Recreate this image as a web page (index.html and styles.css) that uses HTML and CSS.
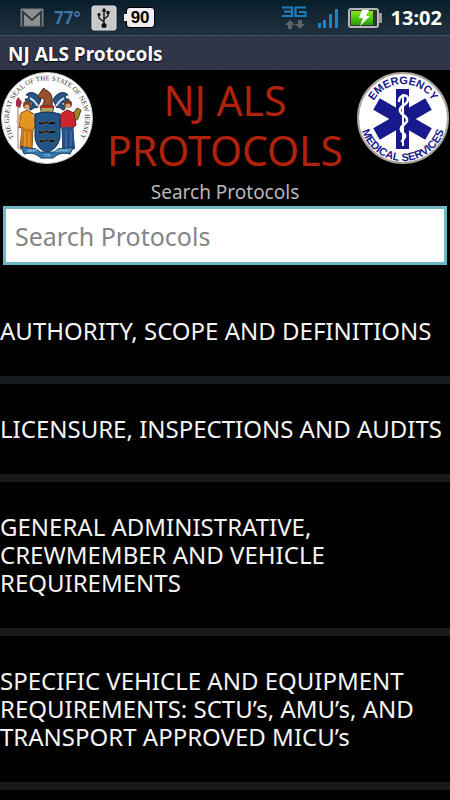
FILE: index.html
```
<!DOCTYPE html>
<html lang="en">
<head>
    <meta charset="UTF-8">
    <meta name="viewport" content="width=device-width, initial-scale=1.0">
    <title>NJ ALS Protocols</title>
    <link rel="stylesheet" href="styles.css">
</head>
<body>
    <div class="statusBar">
        <div class="statusLeft">
            <svg class="mail" width="24" height="20" viewBox="0 0 24 20">
                <rect x="1" y="1" width="22" height="17" fill="#8d9091" stroke="#73797c"/>
                <path d="M3 18V4l9 8 9-8v14" fill="none" stroke="#343c40" stroke-width="2"/>
            </svg>
            <span class="temp">77°</span>
            <svg width="26" height="26" viewBox="0 0 26 26">
                <rect x="1" y="1" width="24" height="24" rx="2" fill="#c9c9c9" stroke="#dedede"/>
                <path d="M13 20V5M13 17l-5-4v-3M13 14l4-3V8" fill="none" stroke="#111" stroke-width="1.4"/>
                <path d="M10.500 6.500L13 2.500l2.500 4z" fill="#111"/>
                <circle cx="13" cy="20.500" r="2.500" fill="#111"/>
                <circle cx="8" cy="9.500" r="1.600" fill="#111"/>
                <rect x="15.500" y="6" width="3" height="3" fill="#111"/>
            </svg>
            <span class="level">90</span>
        </div>
        <div class="statusRight">
            <svg width="28" height="26" viewBox="0 0 28 26">
                <path d="M1 2.500h10v8.500H1M3 6.700h8M25 2.500H14.500v8.500H24.500V7H18" fill="none" stroke="#1c7db8" stroke-width="2.200"/>
                <path d="M9 15l5 5h-3v4H7v-4H4zM19 24l-5-5h3v-4h4v4h3z" fill="#5c6468"/>
            </svg>
            <svg width="22" height="22" viewBox="0 0 22 22">
                <path d="M1 16h3v5H1zM6 13h3v8H6zM12 7h3v14h-3zM18 2h3v19h-3z" fill="#1f86c4"/>
            </svg>
            <svg width="36" height="22" viewBox="0 0 36 22">
                <defs>
                    <linearGradient id="charge" x1="0" y1="0" x2="0" y2="1">
                        <stop offset="0" stop-color="#8fe22c"/>
                        <stop offset="0.500" stop-color="#4fc813"/>
                        <stop offset="1" stop-color="#28980a"/>
                    </linearGradient>
                </defs>
                <rect x="31" y="6" width="4" height="10" fill="#999"/>
                <rect x="2" y="2" width="29" height="18" rx="2" fill="#333" stroke="#b4b8b4" stroke-width="2"/>
                <rect x="4" y="4" width="22" height="14" fill="url(#charge)"/>
                <path d="M15 3h7l-3 6h4L13 19l3-8h-4z" fill="#fff"/>
            </svg>
            <span class="clock">13:02</span>
        </div>
    </div>

    <div class="titleBar">NJ ALS Protocols</div>

    <header class="banner">
        <svg class="seal" viewBox="0 0 94 94" role="img" aria-label="Great Seal of the State of New Jersey">
            <defs>
                <path id="sealArc" d="M20 74A38 38 0 1 1 74 74"/>
            </defs>
            <circle cx="47" cy="47" r="45.500" fill="#fff" stroke="#c4c4c4"/>
            <text class="sealText"><textPath href="#sealArc" startOffset="50%" text-anchor="middle">THE GREAT SEAL OF THE STATE OF NEW JERSEY</textPath></text>
            <!-- mantling and horse head -->
            <path d="M41 29c-3-7-11-10-15-5 5 0 2 5-1 4 1 5 7 2 8 6-4-1-5 3-3 5 3 0 4-4 7-2zM53 29c3-7 11-10 15-5-5 0-2 5 1 4-1 5-7 2-8 6 4-1 5 3 3 5-3 0-4-4-7-2z" fill="#285583" stroke="#152c4b"/>
            <path d="M30 27l4 3 4 5M64 27l-4 3-4 5" fill="none" stroke="#dce6ee" stroke-width="2"/>
            <path d="M42 35c2-4 3-6 1-8l-4 1-1-3 4-6 2-2 1 2c6 1 8 7 7 16z" fill="#96502d" stroke="#4b2416"/>
            <path d="M40 35h14l-2 10H42z" fill="#a7a760" stroke="#54461f"/>
            <path d="M40 36h14" stroke="#b52a28" stroke-width="2"/>
            <!-- liberty -->
            <path d="M18 29v49" stroke="#9b795e"/>
            <path d="M16 30l2-4 4 5-2 6-4-2z" fill="#a52b4e"/>
            <circle cx="27" cy="34" r="4" fill="#774522"/>
            <circle cx="27" cy="36" r="2.500" fill="#d9a57c"/>
            <path d="M21 42l6-3 7 4 2 12-3 3-1 20H20l2-22-3 1z" fill="#e3961d" stroke="#885014"/>
            <path d="M19 44l-1 8M33 44l5 6" stroke="#d9a57c" stroke-width="3"/>
            <path d="M21 57l11 1v20H21z" fill="#ca7616"/>
            <path d="M25 60v17M29 61v15" stroke="#efb23c"/>
            <!-- ceres -->
            <circle cx="68" cy="33" r="4" fill="#71421f"/>
            <circle cx="68" cy="35" r="2.500" fill="#d9a57c"/>
            <path d="M72 44l5-7 4 2-3 9-5 3z" fill="#9c832e" stroke="#57491c"/>
            <path d="M61 43l6-4 7 3 2 12-3 3 1 21H63l-1-20-2-3z" fill="#cc252d" stroke="#78161a"/>
            <path d="M62 56h11l2 22H62z" fill="#254f86"/>
            <path d="M66 59v18M71 60v16" stroke="#5480af"/>
            <!-- shield with three ploughs -->
            <path d="M35 43q12-4 25 0v24q-3 12-13 14-10-2-12-14z" fill="#235487" stroke="#122c50"/>
            <path d="M39 52h16M39 61h16M40 70h14" stroke="#11151b" stroke-width="2"/>
            <path d="M39 50l7 3 8-4M39 59l7 3 8-4M40 68l7 3 7-4" fill="none" stroke="#7b512c"/>
            <path d="M21 75c9 4 14 0 19 6h14c5-6 11-2 20-6l-4 8c-8-2-12 0-17 4H41c-5-4-9-6-17-4z" fill="#3075ac" stroke="#173e65"/>
            <text class="ribbon" x="32" y="81">LIBERTY</text>
            <text class="ribbon" x="62" y="81">PROSPERITY</text>
            <text class="ribbon" x="47" y="86">1776</text>
        </svg>

        <div class="heading">
            <h1>NJ ALS PROTOCOLS</h1>
            <label for="search">Search Protocols</label>
        </div>

        <svg class="seal" viewBox="0 0 94 94" role="img" aria-label="Emergency Medical Services">
            <defs>
                <path id="emsTop" d="M13 47A34 34 0 0 1 81 47"/>
                <path id="emsBottom" d="M4 47A43 43 0 0 0 90 47"/>
            </defs>
            <circle cx="47" cy="47" r="45" fill="#fff" stroke="#aaa59b" stroke-width="2"/>
            <text class="emsText"><textPath href="#emsTop" startOffset="50%" text-anchor="middle">EMERGENCY</textPath></text>
            <text class="emsText"><textPath href="#emsBottom" startOffset="50%" text-anchor="middle">MEDICAL SERVICES</textPath></text>
            <g fill="#17198c">
                <rect x="40" y="18" width="13" height="60"/>
                <rect x="40" y="18" width="13" height="60" transform="rotate(60 46.500 48)"/>
                <rect x="40" y="18" width="13" height="60" transform="rotate(120 46.500 48)"/>
            </g>
            <path d="M47 23v52" stroke="#fff" stroke-width="2"/>
            <path d="M43 30c1-7 9-7 9-2 0 7-9 6-8 12 1 5 8 4 7 10-1 4-7 4-6 9 0 3 5 3 4 7l-3 4" fill="none" stroke="#fff" stroke-width="2.600" stroke-linecap="round"/>
        </svg>
    </header>

    <div class="searchBox">
        <input type="text" id="search" name="search" placeholder="Search Protocols">
    </div>

    <ul class="protocols">
        <li><a href="#authority">AUTHORITY, SCOPE AND DEFINITIONS</a></li>
        <li><a href="#licensure">LICENSURE, INSPECTIONS AND AUDITS</a></li>
        <li><a href="#general">GENERAL ADMINISTRATIVE, CREWMEMBER AND VEHICLE REQUIREMENTS</a></li>
        <li><a href="#vehicle">SPECIFIC VEHICLE AND EQUIPMENT REQUIREMENTS: SCTU’s, AMU’s, AND TRANSPORT APPROVED MICU’s</a></li>
    </ul>
</body>
</html>
```
FILE: styles.css
```
* {
    margin: 0;
    padding: 0;
    box-sizing: border-box;
}

body {
    font-family: "Noto Sans", "Open Sans", sans-serif;
    background-color: #000;
    color: #f4f4f4;
    min-height: 100vh;
}

svg {
    display: block;
    flex-shrink: 0;
}

/* Phone status bar */
.statusBar {
    display: flex;
    justify-content: space-between;
    align-items: center;
    height: 36px;
    padding: 0 8px 0 20px;
    background: linear-gradient(#071e2b, #22313f);
    border-bottom: 1px solid #46505f;
}

.statusLeft,
.statusRight {
    display: flex;
    align-items: center;
    gap: 10px;
}

.statusRight {
    gap: 8px;
}

.temp {
    color: #3f74a8;
    font-size: 17px;
    font-weight: bold;
}

/* Battery percent, with a small nub on the left */
.level {
    position: relative;
    padding: 0 4px;
    border-radius: 3px;
    background-color: #eee;
    box-shadow: 0 0 0 1px #000;
    color: #000;
    font-family: "Liberation Sans", Arial, sans-serif;
    font-size: 17px;
    font-weight: bold;
    line-height: 19px;
}

.level::before {
    content: "";
    position: absolute;
    left: -3px;
    top: 6px;
    width: 3px;
    height: 7px;
    background-color: #eee;
}

.clock {
    color: #fff;
    font-size: 20px;
    font-weight: bold;
}

/* App title */
.titleBar {
    height: 34px;
    padding: 0 8px;
    background: repeating-linear-gradient(45deg, #2d3447 0 2px, #31384c 2px 4px);
    color: #fff;
    font-size: 19px;
    font-weight: bold;
    line-height: 36px;
    text-shadow: 0 1px 2px #000;
}

/* Seals and heading */
.banner {
    display: flex;
    justify-content: space-between;
    align-items: flex-start;
}

.seal {
    width: 94px;
    height: 94px;
    margin-top: 1px;
}

.sealText {
    fill: #333;
    font-family: "Liberation Serif", "Times New Roman", serif;
    font-size: 7px;
}

.ribbon {
    fill: #cfe0ef;
    font-size: 3px;
    text-anchor: middle;
}

.emsText {
    fill: #17198c;
    font-family: "Liberation Sans", Arial, sans-serif;
    font-size: 11px;
    font-weight: bold;
}

.heading {
    flex: 1;
    padding-top: 5px;
    text-align: center;
}

h1 {
    color: #b1220c;
    font-size: 41px;
    font-weight: normal;
    line-height: 50px;
}

label {
    display: block;
    padding-top: 3px;
    color: #b8b8b8;
    font-size: 19px;
    line-height: 28px;
}

/* Search field */
.searchBox {
    padding: 0 3px;
}

.searchBox input {
    display: block;
    width: 100%;
    height: 59px;
    padding: 0 9px;
    border: 3px solid #6cb9c4;
    border-radius: 0;
    background-color: #fff;
    color: #222;
    font-family: inherit;
    font-size: 25px;
}

.searchBox input::placeholder {
    color: #858585;
    opacity: 1;
}

/* Protocol list */
.protocols {
    margin-top: 21px;
    list-style: none;
}

.protocols li {
    border-bottom: 8px solid #181b1e;
}

.protocols a {
    display: block;
    padding: 31px 0;
    color: #f4f4f4;
    font-size: 24px;
    line-height: 28px;
    text-decoration: none;
}
```
